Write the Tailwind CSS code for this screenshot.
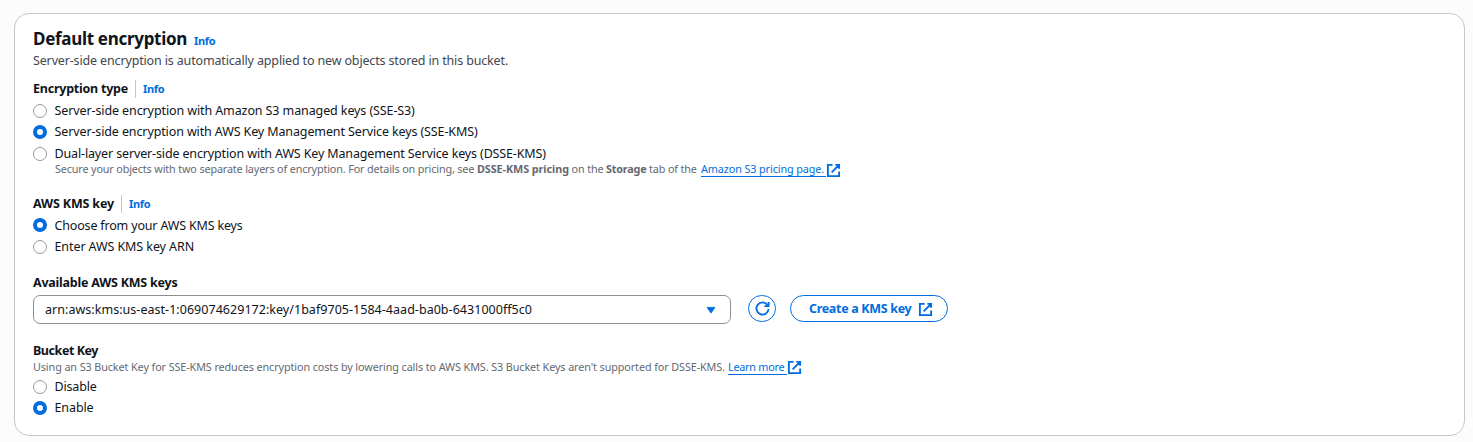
<!DOCTYPE html>
<html lang="en">
<head>
<meta charset="utf-8">
<title>Default encryption</title>
<script src="https://cdn.jsdelivr.net/npm/@tailwindcss/browser@4"></script>
</head>
<body class="h-[442px] overflow-hidden bg-[#fcfcfc] pt-[13px] pl-[14px] font-['Noto_Sans',sans-serif] text-[12.5px] text-[#0f141a]">
<svg class="hidden">
  <symbol id="ext" viewBox="0 0 16 16"><path d="M10 2h4v4M6 10l8-8M14 9.05V14H2V2h5" fill="none" stroke="currentColor" stroke-width="2"/></symbol>
</svg>
<main class="flex h-[423px] w-[1451px] flex-col rounded-[15px] border border-[#c6c6cd] bg-white pt-[13px] pl-[18px] whitespace-nowrap">
  <div class="flex h-6 items-center">
    <h1 class="w-[161px] text-[17px] leading-6 font-bold tracking-[-0.3px]">Default encryption</h1>
    <a class="pt-[5px] text-[11px] font-bold tracking-[-0.3px] text-[#006ce0]">Info</a>
  </div>
  <p class="h-5 leading-5 tracking-[-0.15px] text-[#424650]">Server-side encryption is automatically applied to new objects stored in this bucket.</p>

  <div class="mt-2 flex h-5 items-center">
    <h2 class="w-[102px] font-bold tracking-[-0.23px]">Encryption type</h2>
    <a class="flex h-[18px] items-center border-l border-[#c6c6cd] pl-[7px] text-[11px] font-bold tracking-[-0.3px] text-[#006ce0]">Info</a>
  </div>
  <div class="mt-[2px] flex h-5 items-center gap-[7.5px]">
    <span class="size-[14px] rounded-full border border-[#98989f]"></span>
    <span class="tracking-[-0.105px]">Server-side encryption with Amazon S3 managed keys (SSE-S3)</span>
  </div>
  <div class="mt-px flex h-5 items-center gap-[7.5px]">
    <span class="size-[14px] rounded-full border-4 border-[#006ce0]"></span>
    <span class="tracking-[-0.12px]">Server-side encryption with AWS Key Management Service keys (SSE-KMS)</span>
  </div>
  <div class="mt-[2px] flex h-5 items-center gap-[7.5px]">
    <span class="size-[14px] rounded-full border border-[#98989f]"></span>
    <span class="tracking-[-0.14px]">Dual-layer server-side encryption with AWS Key Management Service keys (DSSE-KMS)</span>
  </div>
  <div class="-mt-[2px] flex h-[14px] items-start pl-[22px] text-[10.8px] leading-[13px] text-[#656871]">
    <p class="w-[646px] tracking-[-0.14px]">Secure your objects with two separate layers of encryption. For details on pricing, see <b class="tracking-[-0.06px]">DSSE-KMS pricing</b> on the <b class="tracking-[-0.2px]">Storage</b> tab of the</p>
    <a class="h-[15px] w-[125px] border-b border-[#006ce0] tracking-[-0.1px] text-[#006ce0]">Amazon S3 pricing page.</a>
    <svg class="mt-px size-[15px] text-[#006ce0]"><use href="#ext"/></svg>
  </div>

  <div class="mt-[18px] flex h-5 items-center">
    <h2 class="w-[88px] font-bold tracking-[-0.155px]">AWS KMS key</h2>
    <a class="flex h-[18px] items-center border-l border-[#c6c6cd] pl-[7px] text-[11px] font-bold tracking-[-0.3px] text-[#006ce0]">Info</a>
  </div>
  <div class="mt-px flex h-5 items-center gap-[7.5px]">
    <span class="size-[14px] rounded-full border-4 border-[#006ce0]"></span>
    <span class="pt-[2px] tracking-[-0.17px]">Choose from your AWS KMS keys</span>
  </div>
  <div class="mt-[2px] flex h-5 items-center gap-[7.5px]">
    <span class="size-[14px] rounded-full border border-[#98989f]"></span>
    <span class="tracking-[-0.09px]">Enter AWS KMS key ARN</span>
  </div>

  <h2 class="mt-4 h-5 leading-5 font-bold tracking-[-0.23px]">Available AWS KMS keys</h2>
  <div class="mt-[2px] flex h-[29px] items-start">
    <div class="flex h-[29px] w-[698px] items-center justify-between rounded-[7px] border border-[#8c8c94] pr-[12px] pl-[11px]">
      <span class="pt-[2px] tracking-[0.035px]">arn:aws:kms:us-east-1:069074629172:key/1baf9705-1584-4aad-ba0b-6431000ff5c0</span>
      <svg class="size-[14px] text-[#006ce0]" viewBox="0 0 16 16"><path d="M3.5 5h9L8 11.5z" fill="currentColor" stroke="currentColor" stroke-linejoin="round"/></svg>
    </div>
    <button class="ml-[17px] flex h-[27px] w-7 items-center justify-center rounded-full border border-[#006ce0] text-[#006ce0]">
      <svg class="size-[15px]" viewBox="0 0 16 16" fill="none" stroke="currentColor" stroke-width="2"><path d="M10 5.5h4.5V1"/><path d="M14.5 8.5a6.5 6.5 0 1 1-1-4"/></svg>
    </button>
    <button class="ml-[14px] flex h-[27px] w-[158px] items-center rounded-full border border-[#006ce0] pl-[18px] text-[#006ce0]">
      <span class="w-[109px] pt-[2px] text-left font-bold tracking-[-0.32px]">Create a KMS key</span>
      <svg class="mt-px size-[15px]"><use href="#ext"/></svg>
    </button>
  </div>

  <h2 class="mt-[17px] h-5 leading-5 font-bold tracking-[-0.44px]">Bucket Key</h2>
  <div class="flex h-[13px] items-start text-[10.8px] leading-[13px] text-[#656871]">
    <p class="-mt-px w-[695px] tracking-[-0.096px]">Using an S3 Bucket Key for SSE-KMS reduces encryption costs by lowering calls to AWS KMS. S3 Bucket Keys aren't supported for DSSE-KMS.</p>
    <a class="-mt-px h-[15px] w-[59px] border-b border-[#006ce0] tracking-[-0.24px] text-[#006ce0]">Learn more</a>
    <svg class="-mt-px size-[15px] text-[#006ce0]"><use href="#ext"/></svg>
  </div>
  <div class="mt-[3px] flex h-5 items-center gap-[7.5px]">
    <span class="size-[14px] rounded-full border border-[#98989f]"></span>
    <span class="tracking-[-0.18px]">Disable</span>
  </div>
  <div class="mt-px flex h-5 items-center gap-[7.5px]">
    <span class="size-[14px] rounded-full border-4 border-[#006ce0]"></span>
    <span class="tracking-[-0.1px]">Enable</span>
  </div>
</main>
</body>
</html>
